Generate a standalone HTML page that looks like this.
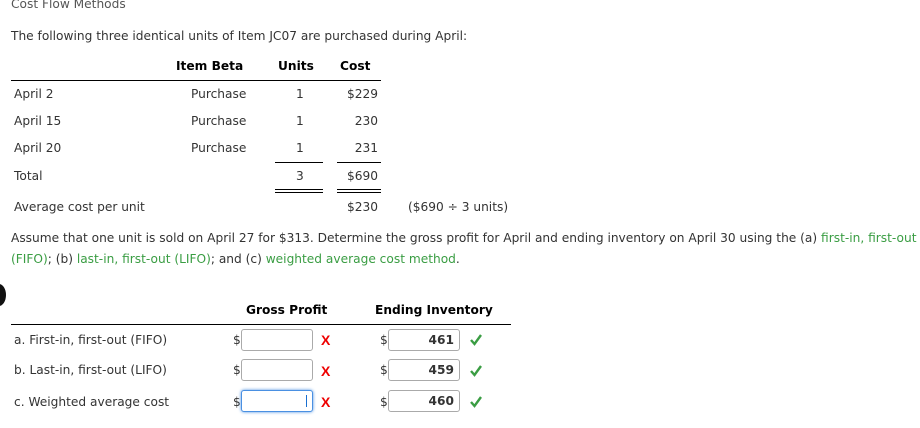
<!DOCTYPE html>
<html><head><style>
body{margin:0;width:920px;height:428px;overflow:hidden;background:#fff;font-family:"DejaVu Sans","Liberation Sans",sans-serif;font-size:12.2px;color:#333;position:relative}
.a{position:absolute;white-space:nowrap}
.b{font-weight:bold;color:#000}
.r{text-align:right}
.l{position:absolute;background:#000;height:1px}
.g{color:#3a9d43}
.in{position:absolute;width:72px;height:22px;border:1px solid #aaa;border-radius:3px;background:#fff;box-sizing:border-box;font-weight:bold;color:#333;text-align:right;padding-right:5px;line-height:20px;font-size:12.2px}
.x{position:absolute;color:#e00;font-weight:bold;font-size:14px;font-family:"Liberation Sans",sans-serif}
.ck{position:absolute}
</style></head><body>
<div class="a" style="left:11px;top:-3px;color:#555">Cost Flow Methods</div>
<div class="a" style="left:11px;top:29px">The following three identical units of Item JC07 are purchased during April:</div>
<div class="a b" style="left:176px;top:59px">Item Beta</div>
<div class="a b" style="left:278px;top:59px">Units</div>
<div class="a b" style="left:340px;top:59px">Cost</div>
<div class="l" style="left:11px;top:80px;width:370px"></div>
<div class="a" style="left:14px;top:87px">April 2</div>
<div class="a" style="left:14px;top:114px">April 15</div>
<div class="a" style="left:14px;top:141px">April 20</div>
<div class="a" style="left:14px;top:169px">Total</div>
<div class="a" style="left:14px;top:200px">Average cost per unit</div>
<div class="a" style="left:191px;top:87px">Purchase</div>
<div class="a" style="left:191px;top:114px">Purchase</div>
<div class="a" style="left:191px;top:141px">Purchase</div>
<div class="a" style="left:296px;top:87px">1</div>
<div class="a" style="left:296px;top:114px">1</div>
<div class="a" style="left:296px;top:141px">1</div>
<div class="a" style="left:296px;top:169px">3</div>
<div class="a r" style="left:330px;width:48px;top:87px">$229</div>
<div class="a r" style="left:330px;width:48px;top:114px">230</div>
<div class="a r" style="left:330px;width:48px;top:141px">231</div>
<div class="a r" style="left:330px;width:48px;top:169px">$690</div>
<div class="a r" style="left:330px;width:48px;top:200px">$230</div>
<div class="a" style="left:408px;top:200px">($690 ÷ 3 units)</div>
<div class="l" style="left:275px;top:162px;width:48px"></div>
<div class="l" style="left:337px;top:162px;width:44px"></div>
<div class="l" style="left:275px;top:189px;width:48px"></div>
<div class="l" style="left:337px;top:189px;width:44px"></div>
<div class="l" style="left:275px;top:192px;width:48px"></div>
<div class="l" style="left:337px;top:192px;width:44px"></div>
<div class="a" style="left:11px;top:231px">Assume that one unit is sold on April 27 for $313. Determine the gross profit for April and ending inventory on April 30 using the (a) <span class="g">first-in, first-out</span></div>
<div class="a" style="left:11px;top:252px"><span class="g">(FIFO)</span>; (b) <span class="g">last-in, first-out (LIFO)</span>; and (c) <span class="g">weighted average cost method</span>.</div>
<div style="position:absolute;left:-8px;top:284px;width:14px;height:22px;border-radius:50%;background:#111"></div>
<div class="a b" style="left:246px;top:303px">Gross Profit</div>
<div class="a b" style="left:375px;top:303px">Ending Inventory</div>
<div class="l" style="left:11px;top:324px;width:500px"></div>
<div class="a" style="left:14px;top:333px">a. First-in, first-out (FIFO)</div>
<div class="a" style="left:14px;top:363px">b. Last-in, first-out (LIFO)</div>
<div class="a" style="left:14px;top:395px">c. Weighted average cost</div>
<div class="a" style="left:233px;top:333px">$</div><div class="in" style="left:241px;top:329px"></div><div class="x" style="left:321px;top:332px">X</div>
<div class="a" style="left:233px;top:363px">$</div><div class="in" style="left:241px;top:359px"></div><div class="x" style="left:321px;top:363px">X</div>
<div class="a" style="left:233px;top:395px">$</div><div class="in" style="left:241px;top:390px;border:1px solid #4a90e2;box-shadow:0 0 3px #4a90e2"><span style="position:absolute;right:5px;top:4px;width:1px;height:12px;background:#1a6fd0"></span></div><div class="x" style="left:321px;top:394px">X</div>
<div class="a" style="left:380px;top:333px">$</div><div class="in" style="left:388px;top:329px">461</div>
<div class="a" style="left:380px;top:363px">$</div><div class="in" style="left:388px;top:359px">459</div>
<div class="a" style="left:380px;top:395px">$</div><div class="in" style="left:388px;top:390px">460</div>
<svg class="ck" style="left:469px;top:333px" width="14" height="14"><path d="M2 7 L5.5 11 L12 2" stroke="#3a9d43" stroke-width="2.4" fill="none"/></svg>
<svg class="ck" style="left:469px;top:364px" width="14" height="14"><path d="M2 7 L5.5 11 L12 2" stroke="#3a9d43" stroke-width="2.4" fill="none"/></svg>
<svg class="ck" style="left:469px;top:395px" width="14" height="14"><path d="M2 7 L5.5 11 L12 2" stroke="#3a9d43" stroke-width="2.4" fill="none"/></svg>
</body></html>
